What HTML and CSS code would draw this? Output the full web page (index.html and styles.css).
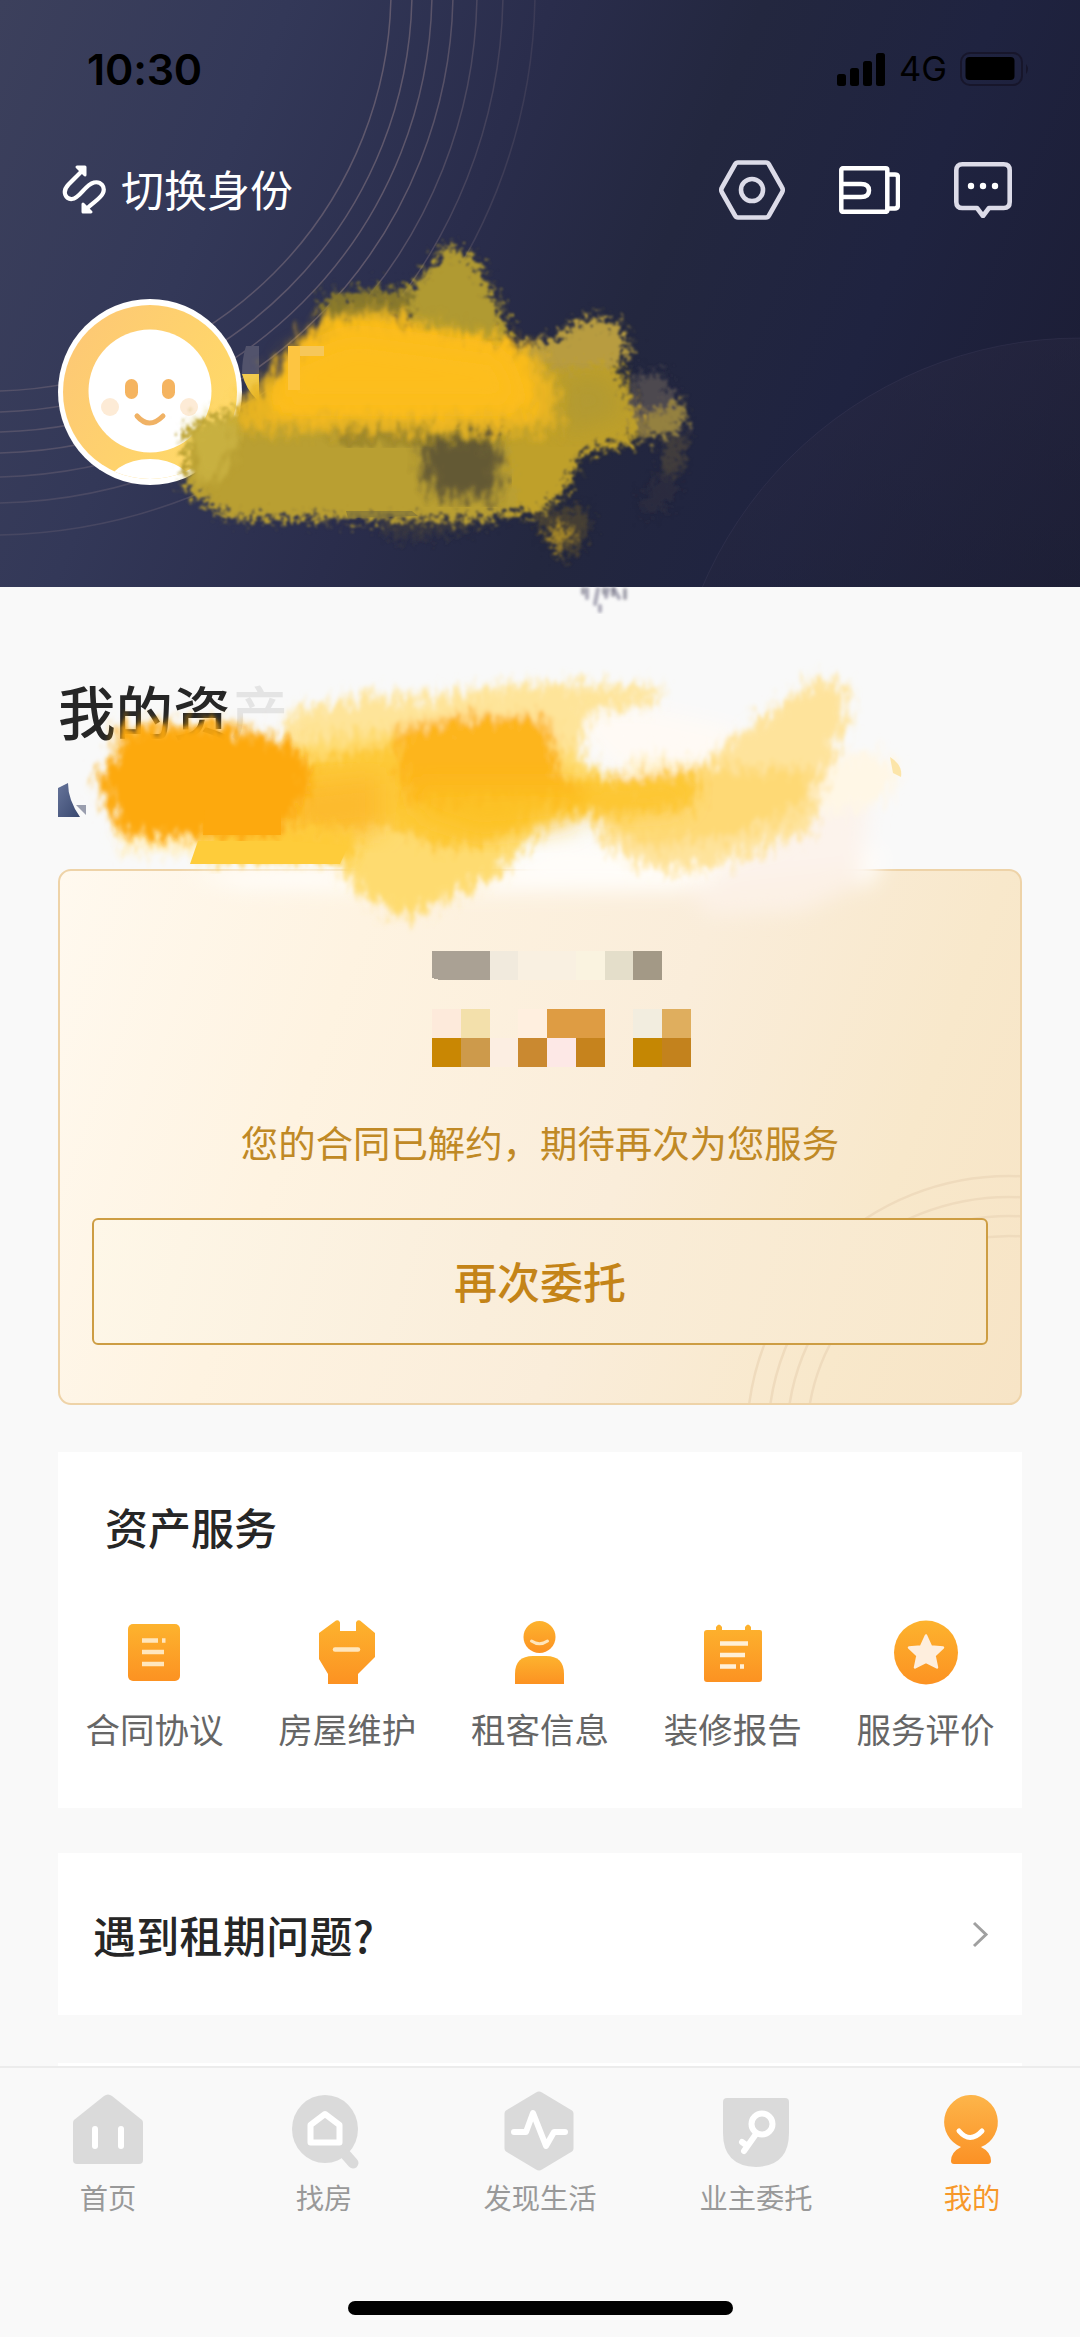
FILE: index.html
```html
<!DOCTYPE html>
<html lang="zh-CN">
<head>
<meta charset="utf-8">
<title>我的</title>
<link rel="stylesheet" href="styles.css">
</head>
<body>
<div class="screen">
  <header class="hero">
    <svg class="hero-art" viewBox="0 0 1080 587" aria-hidden="true">
      <defs>
        <linearGradient id="ringFade" gradientUnits="userSpaceOnUse" x1="0" y1="0" x2="560" y2="0">
          <stop offset="0" stop-color="#a58d91" stop-opacity=".26"/>
          <stop offset=".7" stop-color="#a58d91" stop-opacity=".42"/>
          <stop offset="1" stop-color="#a58d91" stop-opacity=".2"/>
        </linearGradient>
        <linearGradient id="moon" x1="0" y1="0" x2=".4" y2="1">
          <stop offset="0" stop-color="#302d48" stop-opacity=".5"/>
          <stop offset=".5" stop-color="#1e2238" stop-opacity=".3"/>
        </linearGradient>
      </defs>
      <g fill="none" stroke="url(#ringFade)" stroke-width="1.500">
        <circle cx="-10" cy="-10" r="401"/><circle cx="-10" cy="-10" r="422"/>
        <circle cx="-10" cy="-10" r="442"/><circle cx="-10" cy="-10" r="463"/>
        <circle cx="-10" cy="-10" r="487" opacity=".8"/><circle cx="-10" cy="-10" r="513" opacity=".7"/>
        <circle cx="-10" cy="-10" r="545" opacity=".6"/>
      </g>
      <circle cx="1080" cy="749" r="411" fill="url(#moon)" stroke="#4a4866" stroke-opacity=".25"/>
    </svg>

    <div class="status">
      <span class="clock">10:30</span>
      <div class="status-right">
        <svg width="48" height="33" viewBox="0 0 48 33"><rect y="21" width="9" height="12" rx="2.500"/><rect x="13" y="15" width="9" height="18" rx="2.500"/><rect x="26" y="8" width="9" height="25" rx="2.500"/><rect x="39" y="0" width="9" height="33" rx="2.500"/></svg>
        <span class="net">4G</span>
        <svg width="70" height="34" viewBox="0 0 70 34"><rect x="1" y="1" width="61" height="32" rx="9" fill="none" stroke="#17162b" stroke-width="2"/><rect x="5.500" y="5" width="49" height="23" rx="4"/><path d="M66 12q4 5 0 10z" fill="#17162b"/></svg>
      </div>
    </div>

    <nav class="topbar">
      <a class="switch">
        <svg width="44" height="50" viewBox="0 0 44 50" fill="none" stroke="#fff" stroke-width="4.200"><path d="M19 7 6.500 19.500C-1 27.500 4.500 34.500 10 34c8-.5 12.500-14 22-16.500 7-1.500 11.500 4.500 9 10.500C38.500 34 30 38 24 44.500" stroke-linecap="round"/><path d="M15 2h8v8zM29 47h-8v-8z" fill="#fff" stroke-width="3" stroke-linejoin="round"/></svg>
        <span>切换身份</span>
      </a>
      <div class="actions">
        <svg width="66" height="60" viewBox="0 0 66 60" fill="none" stroke="#dcdbe8" stroke-width="4.600" stroke-linejoin="round"><path d="M19 2.500h28q2 0 3 2l13 23q1.500 2.500 0 5L50 55.500q-1 2-3 2H19q-2 0-3-2l-13-23q-1.500-2.500 0-5l13-23q1-2 3-2z"/><circle cx="33" cy="30" r="11"/></svg>
        <svg width="61" height="48" viewBox="0 0 61 48" fill="none" stroke="#fff" stroke-width="4.500"><rect x="2.300" y="2.300" width="46" height="43.500" rx="1.500"/><path d="M2 18h20q8 0 8 6.500t-8 6.500H2M48 8.500h8q3 0 3 3v27q0 4-3 4h-8"/></svg>
        <svg width="58" height="56" viewBox="0 0 58 56" fill="none" stroke="#dcdbe8" stroke-width="4.600" stroke-linejoin="round"><path d="M8.300 2.300h41.400q6 0 6 6v31.700q0 6-6 6H35l-6 8-6-8H8.300q-6 0-6-6V8.300q0-6 6-6z"/><g fill="#fff" stroke="none"><circle cx="17" cy="24" r="3.200"/><circle cx="29" cy="24" r="3.200"/><circle cx="41" cy="24" r="3.200"/></g></svg>
      </div>
    </nav>

    <svg class="avatar" viewBox="0 0 184 186">
      <defs>
        <linearGradient id="face" x1="0" y1=".2" x2="1" y2=".8"><stop offset="0" stop-color="#fdc875"/><stop offset="1" stop-color="#ffdb66"/></linearGradient>
        <clipPath id="disc"><circle cx="92" cy="93" r="87"/></clipPath>
      </defs>
      <ellipse cx="92" cy="93" rx="92" ry="93" fill="#fff"/>
      <circle cx="92" cy="93" r="87" fill="url(#face)"/>
      <circle cx="92" cy="92" r="61.500" fill="#fff"/>
      <ellipse cx="92" cy="190" rx="44" ry="30" fill="#fff" clip-path="url(#disc)"/>
      <rect x="67" y="80" width="13" height="20" rx="6.500" fill="#f5b460"/><rect x="104" y="80" width="13" height="20" rx="6.500" fill="#f5b460"/>
      <circle cx="52" cy="108" r="9" fill="#fdebd6"/><circle cx="131" cy="108" r="9" fill="#fdebd6"/>
      <path d="M79 117q12 14 26 0" fill="none" stroke="#f0b265" stroke-width="5" stroke-linecap="round"/>
    </svg>
  </header>

  <main class="content">
    <h1 class="title">我的资<span class="faded">产</span></h1>
    <svg class="chip" width="30" height="34" viewBox="0 0 30 34"><defs><linearGradient id="chipc" x1="0" y1="0" x2="1" y2="1"><stop offset="0" stop-color="#66749a"/><stop offset="1" stop-color="#39486f"/></linearGradient></defs><path d="M0 5 10 0q0 17 12 34H0z" fill="url(#chipc)"/><path d="M18 22h10v10z" fill="#9a9eae"/></svg>

    <section class="contract">
      <svg class="contract-art" viewBox="0 0 964 536" fill="none" stroke="#efdbbd" stroke-width="2.500"><circle cx="951" cy="569" r="262"/><circle cx="951" cy="569" r="241"/><circle cx="951" cy="569" r="222"/><circle cx="951" cy="569" r="202"/></svg>
      <svg class="mosaic" viewBox="0 0 9 4" preserveAspectRatio="none" shape-rendering="crispEdges">
        <path d="M0 0h2v1H.3L0 .93z" fill="#aaa194"/><path d="M2 0h1v1H2z" fill="#f1eadd"/><path d="M3 0h2v1H3z" fill="#f9f0e1"/><path d="M5 0h1v1H5z" fill="#faf3e0"/><path d="M6 0h1v1H6z" fill="#e4deca"/><path d="M7 0h1v1H7z" fill="#a39986"/>
        <path d="M0 2h1v1H0z" fill="#fdeadb"/><path d="M1 2h1v1H1z" fill="#f3e0ab"/><path d="M3 2h1v1H3z" fill="#ffefdf"/><path d="M4 2h2v1H4z" fill="#de9c43"/><path d="M7 2h1v1H7z" fill="#f2eddf"/><path d="M8 2h1v1H8z" fill="#dfae5e"/>
        <path d="M0 3h1v1H0z" fill="#c98703"/><path d="M1 3h1v1H1z" fill="#cd9a4b"/><path d="M2 3h1v1H2z" fill="#fceee2"/><path d="M3 3h1v1H3z" fill="#ca8930"/><path d="M4 3h1v1H4z" fill="#fde8e6"/><path d="M5 3h1v1H5z" fill="#c6831d"/><path d="M7 3h1v1H7z" fill="#c58703"/><path d="M8 3h1v1H8z" fill="#c3821d"/>
      </svg>
      <p class="notice">您的合同已解约，期待再次为您服务</p>
      <button class="again">再次委托</button>
    </section>

    <section class="services">
      <h2>资产服务</h2>
      <svg width="0" height="0" class="defs"><defs><linearGradient id="org" x1="0" y1="0" x2="0" y2="1"><stop offset="0" stop-color="#fdb32e"/><stop offset="1" stop-color="#fc9222"/></linearGradient></defs></svg>
      <ul class="grid">
        <li><svg viewBox="0 0 72 72"><rect x="10" y="8" width="52" height="57" rx="5" fill="url(#org)"/><path d="M24 24.500h16M44 24.500h3.500M24 36h22M24 48h22" stroke="#ffe6bd" stroke-width="4.500"/></svg><span>合同协议</span></li>
        <li><svg viewBox="0 0 72 72"><path d="M8 17 25 4.500q3-1 4 2V15h16V6.500q1-3 4-2L64 17v24L47 58v10H17V58L8 43z" fill="url(#org)"/><path d="M24 33.500h23" stroke="#ffe6bd" stroke-width="4.500" stroke-linecap="round"/></svg><span>房屋维护</span></li>
        <li><svg viewBox="0 0 72 72"><circle cx="35.500" cy="21" r="16" fill="url(#org)"/><path d="M11 68V58q0-18 18-18h13q18 0 18 18v10z" fill="url(#org)"/><path d="M27.500 25q8 5.500 16 0" fill="none" stroke="#ffe6bd" stroke-width="3" stroke-linecap="round"/></svg><span>租客信息</span></li>
        <li><svg viewBox="0 0 72 72"><path d="M10 14h9v-3q3-5 6 0v3h23v-3q3-5 6 0v3h9q2 0 2 2v47q0 3-3 3H10q-3 0-3-3V17q0-3 3-3z" fill="url(#org)"/><path d="M23 27.500h28M23 39h25M23 50.500h16M43 50.500h4" stroke="#fff0d7" stroke-width="4.500"/></svg><span>装修报告</span></li>
        <li><svg viewBox="0 0 72 72"><circle cx="36" cy="36.500" r="32" fill="url(#org)"/><path d="M36 19.500l5 11L53 31.500l-8.500 8L47 51.500 36 46 25 51.500 27.500 39.500 19 31.500l12-1z" fill="#feeedd" stroke="#feeedd" stroke-width="2.500" stroke-linejoin="round"/></svg><span>服务评价</span></li>
      </ul>
    </section>

    <section class="question">
      <h2>遇到租期问题?</h2>
      <svg width="18" height="28" viewBox="0 0 18 28" fill="none" stroke="#a0a0a0" stroke-width="3"><path d="M3 3l12 11.500L3 26"/></svg>
    </section>
    <section class="next"></section>
  </main>

  <footer class="tabs">
    <div class="tab-row">
      <a class="tab"><svg viewBox="0 0 80 80"><path d="M36 5q4-3 8 0l30 24q1 1 1 3v37q0 4-4 4H9q-4 0-4-4V32q0-2 1-3z" fill="#dadada"/><path d="M27 38v17M53 38v17" stroke="#fff" stroke-width="6" stroke-linecap="round"/></svg><span>首页</span></a>
      <a class="tab"><svg viewBox="0 0 80 80"><ellipse cx="41" cy="38" rx="33" ry="34" fill="#dadada"/><path d="M62 64l7 8" stroke="#dadada" stroke-width="11" stroke-linecap="round"/><path d="M41 23 26.500 34v17.500h29V34z" fill="none" stroke="#fff" stroke-width="6" stroke-linejoin="round"/></svg><span>找房</span></a>
      <a class="tab"><svg viewBox="0 0 80 80"><path d="M36 1.500q3-2 6 0l30 18q1.500 1 1.500 3v35q0 2-1.500 3l-30 18q-3 2-6 0l-30-18q-1.500-1-1.500-3v-35q0-2 1.500-3z" fill="#dadada"/><path d="M14 41h12l7-19 13 33 8-14h11" fill="none" stroke="#fff" stroke-width="6" stroke-linecap="round" stroke-linejoin="round"/></svg><span>发现生活</span></a>
      <a class="tab"><svg viewBox="0 0 80 80"><path d="M11 7h58q4 0 4 4v31q0 33-33 34Q7 75 7 42V11q0-4 4-4z" fill="#dadada"/><g fill="none" stroke="#fff" stroke-width="6" stroke-linecap="round"><circle cx="46" cy="33" r="10.500"/><path d="M40 43 28 60M26 51l4 3"/></g></svg><span>业主委托</span></a>
      <a class="tab on"><svg viewBox="0 0 80 80"><defs><linearGradient id="me" x1="0" y1="0" x2="0" y2="1"><stop offset="0" stop-color="#fdb54a"/><stop offset="1" stop-color="#fb9125"/></linearGradient></defs><path d="M38 4a27 27 0 0 1 11 52q10 5 10 14 0 3-3 3H22q-3 0-3-3 0-9 10-14A27 27 0 0 1 38 4z" fill="url(#me)"/><path d="M27 40q11 13 23 0" fill="none" stroke="#fff" stroke-width="5" stroke-linecap="round"/></svg><span>我的</span></a>
    </div>
    <div class="home-bar"></div>
  </footer>

  <!-- brush strokes that hide the private fields -->
  <svg class="brush" viewBox="0 0 1080 2337" aria-hidden="true">
    <defs>
      <filter id="rough" x="-10%" y="-10%" width="120%" height="120%">
        <feTurbulence type="fractalNoise" baseFrequency=".16" numOctaves="3" seed="4" result="n"/>
        <feGaussianBlur in="SourceGraphic" stdDeviation="3" result="b"/>
        <feDisplacementMap in="b" in2="n" scale="34" xChannelSelector="R" yChannelSelector="G"/>
        <feGaussianBlur stdDeviation="1.200"/>
      </filter>
      <filter id="soft" x="-10%" y="-10%" width="120%" height="120%">
        <feTurbulence type="fractalNoise" baseFrequency=".13 .06" numOctaves="3" seed="9" result="n"/>
        <feGaussianBlur in="SourceGraphic" stdDeviation="6" result="b"/>
        <feDisplacementMap in="b" in2="n" scale="30" xChannelSelector="R" yChannelSelector="G"/>
        <feGaussianBlur stdDeviation="1.500"/>
      </filter>
      <filter id="melt" x="-20%" y="-20%" width="140%" height="140%">
        <feGaussianBlur in="SourceGraphic" stdDeviation="12"/>
      </filter>
      <filter id="haze" x="-20%" y="-20%" width="140%" height="140%"><feGaussianBlur stdDeviation="10"/></filter>
      <filter id="smudge"><feGaussianBlur stdDeviation="1.500"/></filter>
    </defs>
    <path d="M246 346h13v28h-17q0-16 4-28z" fill="#52536c"/>
    <path d="M242 374h17v27q-12-9-17-27z" fill="#f2cb4f"/>
    <g filter="url(#rough)">
      <path d="M534 512l52-4 3 22-12 20-12 8-10-6-14-24z" fill="#54492f" opacity=".7"/>
      <path d="M551 528l8 30 5-24 8 10-2-18z" fill="#ad8d28"/>
      <path d="M385 516l120 2-40 14-60 8-25-6z" fill="#4a4738" opacity=".4"/>
      <path d="M665 440l24-5-8 35-20 10z" fill="#706034" opacity=".4"/>
      <path d="M645 490l30-25 3 20-12 25-25 5z" fill="#463d3a" opacity=".25"/>
      <path d="M636 376l24-4 24 38 2 20-30 8-24-12z" fill="#4e4850"/>
      <path d="M645 414l36-12 6 18-14 14-32 6z" fill="#94813f"/>
      <path d="M323 296l52-7 34-1 3 30-88 12z" fill="#85772d"/>
      <path d="M409 290l39-44 26 12 23 42 16 46-44 10-58-20z" fill="#b09a32"/>
      <path d="M515 345l35-5 38-23 28 4 15 27-14 18-56 15-38 6z" fill="#b89c3f"/>
      <path d="M505 355l50 15 62-6 22 56-2 22-55 11-18 40-24 19-46 3z" fill="#bfa02b"/>
      <path d="M184 427l60-20 200 10 62 20 12 70-30 12H232l-46-28z" fill="#b99f33"/>
    </g>
    <path d="M415 440l80-4 8 54-22 10-48-4z" fill="#5a5134" opacity=".9" filter="url(#soft)"/>
    <path d="M330 425l160-2 5 14-155 8z" fill="#6f652c" opacity=".6" filter="url(#soft)"/>
    <path d="M560 375l50 0 14 40-60 20z" fill="#aa9638" opacity=".6" filter="url(#melt)"/>
    <path d="M186 425q40-10 52-20l0 25-10 40-30 18z" fill="#dcc652" opacity=".45" filter="url(#soft)"/>
    <g filter="url(#soft)">
      <path d="M235 412l28-34 35-30 25-32 62-9 40 18 80 14 30 13 24 42-4 34-60 6-250-3z" fill="#e6b322"/>
      <path d="M270 395l32-58 50-16 66 4 96 16 22 40-2 34H270z" fill="#fbbc1b"/>
    </g>
    <path d="M290 360l60-25 150 20 20 50H280z" fill="#fdbe1a" filter="url(#melt)"/>
    <path d="M288 346h12v44h-12z" fill="#fdc541"/><path d="M300 346h24v10h-24z" fill="#f6c75a"/>
    <path d="M346 511h66l6 5-70 2z" fill="#80733b" opacity=".7"/>
    <g stroke="#77758c" stroke-linecap="round" fill="none" filter="url(#smudge)"><path d="M587 589v9M598 589l-3 15M608 589l-2 8M614 589l5 9M600 606v5" stroke-width="4" stroke-opacity=".6"/><path d="M583 589v4M604 589v4M613 589v6M625 590v8" stroke="#4c4960" stroke-width="4" stroke-opacity=".5"/></g>

    <g filter="url(#haze)">
      <path d="M185 873l120-8 160 20 90-45 160 10 110-20 60 25-15 30-150 6-280 1-200-4z" fill="#fffdf9"/>
      <path d="M710 870l70-35 60-50 30 10-10 80-60 30-60-4z" fill="#fcf3ec"/>
      <path d="M680 885l180-20 0 20-60 26-90 4z" fill="#fcf1e6"/>
      <path d="M560 710l90 0 90 20-30 40-90 0z" fill="#fffaf5"/>
    </g>
    <g filter="url(#soft)">
      <path d="M115 820h60l30 15v20l-85-4z" fill="#fff0c4"/>
      <path d="M290 712l80-17 50 2 110-14 130 5-2 14-70 12-10 60-200 30-100-30z" fill="#fee499"/>
      <path d="M822 758l60-6 20 20-20 30-50 14-24-20z" fill="#fff7e6"/>
      <path d="M640 755l90 10-20 30-110-5z" fill="#fff3d2"/>
      <path d="M600 790l100-25 50-40 70-48 26 10 2 34-26 65-10 46-42 14-64 24-66-2-42-30z" fill="#fee39b"/>
      <path d="M590 785l100-17 124 0-12 42-72 28-74 8-50-16z" fill="#fed974"/>
      <path d="M290 740l140-15 130 20 50 32 90 6-10 24-60 12-76-2-60 60-84 40-40-14-44-50z" fill="#fedb70"/>
      <path d="M280 765l130-25 170 38 120-5-4 34-90 8-60-6-56 35-50 4-60-25-60 15-40-6z" fill="#fdc937"/>
      <path d="M395 730l78-16 74 4 14 54 24 28-180 5z" fill="#fdb51b"/>
    </g>
    <g filter="url(#melt)">
      <path d="M290 785l90-10v55l-90 10z" fill="#fdb829" opacity=".8"/>
      <path d="M410 785h190l-30 40-90 10-60-20z" fill="#fcc022" opacity=".8"/>
      <path d="M590 795l100-8-15 22-80 4z" fill="#fdc42f" opacity=".8"/>
    </g>
    <g filter="url(#soft)">
      <path d="M200 826h110l50 10-6 24H200z" fill="#fecb37"/>
      <path d="M115 726l105-3 74 20 20 30-22 45-8 18-160 2-14-28-14-30 22-30z" fill="#fda90e"/>
    </g>
    <path d="M198 841h90l60 5-8 18H190z" fill="#fecc3a"/>
    <path d="M205 810h76v25h-78z" fill="#fda90e"/>
    <path d="M890 757q13 8 11 20l-8-4z" fill="#fce5a9"/>
  </svg>
</div>
</body>
</html>
```
FILE: styles.css
```css
* { box-sizing: border-box; margin: 0; padding: 0; }

body {
  width: 1080px;
  background: #f9f9f9;
  color: #262626;
  font-family: "Noto Sans CJK SC", "Noto Sans", sans-serif;
}

svg { display: block; flex: none; }

.screen {
  position: relative;
  display: flex;
  flex-direction: column;
  width: 1080px;
  height: 2337px;
  overflow: hidden;
}

/* header */
.hero {
  position: relative;
  flex: none;
  height: 587px;
  padding-top: 44px;
  background: linear-gradient(112deg, #3c405c 0%, #333858 22%, #2a2d4c 42%, #23273f 58%, #1f2340 76%, #1b1c33 100%);
}

.hero-art { position: absolute; inset: 0; width: 1080px; height: 587px; }

.status, .topbar { position: relative; display: flex; justify-content: space-between; align-items: center; }

.status { height: 50px; padding: 0 50px 0 87px; color: #000; }

.clock { font: 600 43px/50px Inter, sans-serif; letter-spacing: -0.2px; }

.status-right { display: flex; align-items: center; gap: 14px; }

.net { width: 47px; font: 400 34.500px/50px Inter, sans-serif; }

.topbar { height: 64px; margin-top: 64px; padding: 0 68px 0 62px; }

.switch { display: flex; align-items: center; gap: 15px; color: #fff; font-size: 43px; line-height: 60px; }

.switch span { padding-bottom: 4px; }

.actions { display: flex; align-items: center; gap: 54px; }

.avatar { position: relative; width: 184px; height: 186px; margin: 77px 0 0 58px; }

/* content */
.content { flex: 1; min-height: 0; padding: 86px 58px 0; overflow: hidden; }

.title { font-size: 57.500px; line-height: 74px; font-weight: 500; }

.faded { color: #e4e4e4; }

.chip { margin-top: 36px; }

.contract {
  position: relative;
  display: flex;
  flex-direction: column;
  align-items: center;
  height: 536px;
  margin-top: 52px;
  padding-top: 80px;
  border: 2px solid #eed3a8;
  border-radius: 13px;
  background: linear-gradient(110deg, #fff9ef 0%, #fef3e1 28%, #faedda 58%, #f8e8cb 82%, #f7e4c6 100%);
  overflow: hidden;
}

.contract-art { position: absolute; left: -2px; top: -2px; width: 964px; height: 536px; }

.mosaic { position: relative; width: 259px; height: 116px; margin-left: 42px; }

.notice { position: relative; margin-top: 50px; color: #c08925; font-size: 37.400px; line-height: 50px; }

.again {
  position: relative;
  width: 896px;
  height: 127px;
  margin-top: 51px;
  padding-bottom: 4px;
  border: 2px solid #cd9d43;
  border-radius: 6px;
  background: linear-gradient(105deg, #fef7e8 0%, #faeedb 45%, #f8e8cc 100%);
  color: #c48418;
  font: 500 43px/60px "Noto Sans CJK SC", sans-serif;
}

.services { height: 356px; margin-top: 47px; padding-top: 44px; background: #fff; }

.services h2, .question h2 { font-size: 43px; line-height: 60px; font-weight: 500; }

.services h2 { margin-left: 47px; }

.question h2 { letter-spacing: 0.3px; }

.defs { position: absolute; }

.grid { display: grid; grid-template-columns: repeat(5, 1fr); margin-top: 60px; list-style: none; }

.grid li { display: flex; flex-direction: column; align-items: center; color: #666; font-size: 34.500px; line-height: 48px; }

.grid svg { width: 72px; height: 72px; margin-bottom: 16px; }

.question {
  display: flex;
  justify-content: space-between;
  align-items: center;
  height: 162px;
  margin-top: 45px;
  padding: 0 33px 0 35px;
  background: #fff;
}

.next { height: 60px; margin-top: 48px; background: #fff; }

/* tab bar */
.tabs {
  flex: none;
  display: flex;
  flex-direction: column;
  align-items: center;
  height: 271px;
  padding-top: 23px;
  border-top: 2px solid #ececec;
  background: #f9f9f9;
}

.tab-row { display: grid; grid-template-columns: repeat(5, 1fr); width: 1080px; }

.tab { display: flex; flex-direction: column; align-items: center; color: #999; font-size: 28.300px; line-height: 40px; }

.tab svg { width: 80px; height: 80px; margin-bottom: 6px; }

.tab.on { color: #f7982a; }

.home-bar { width: 385px; height: 14px; margin-top: 84px; border-radius: 7px; background: #000; }

.brush { position: absolute; left: 0; top: 0; width: 1080px; height: 2337px; pointer-events: none; }
```
